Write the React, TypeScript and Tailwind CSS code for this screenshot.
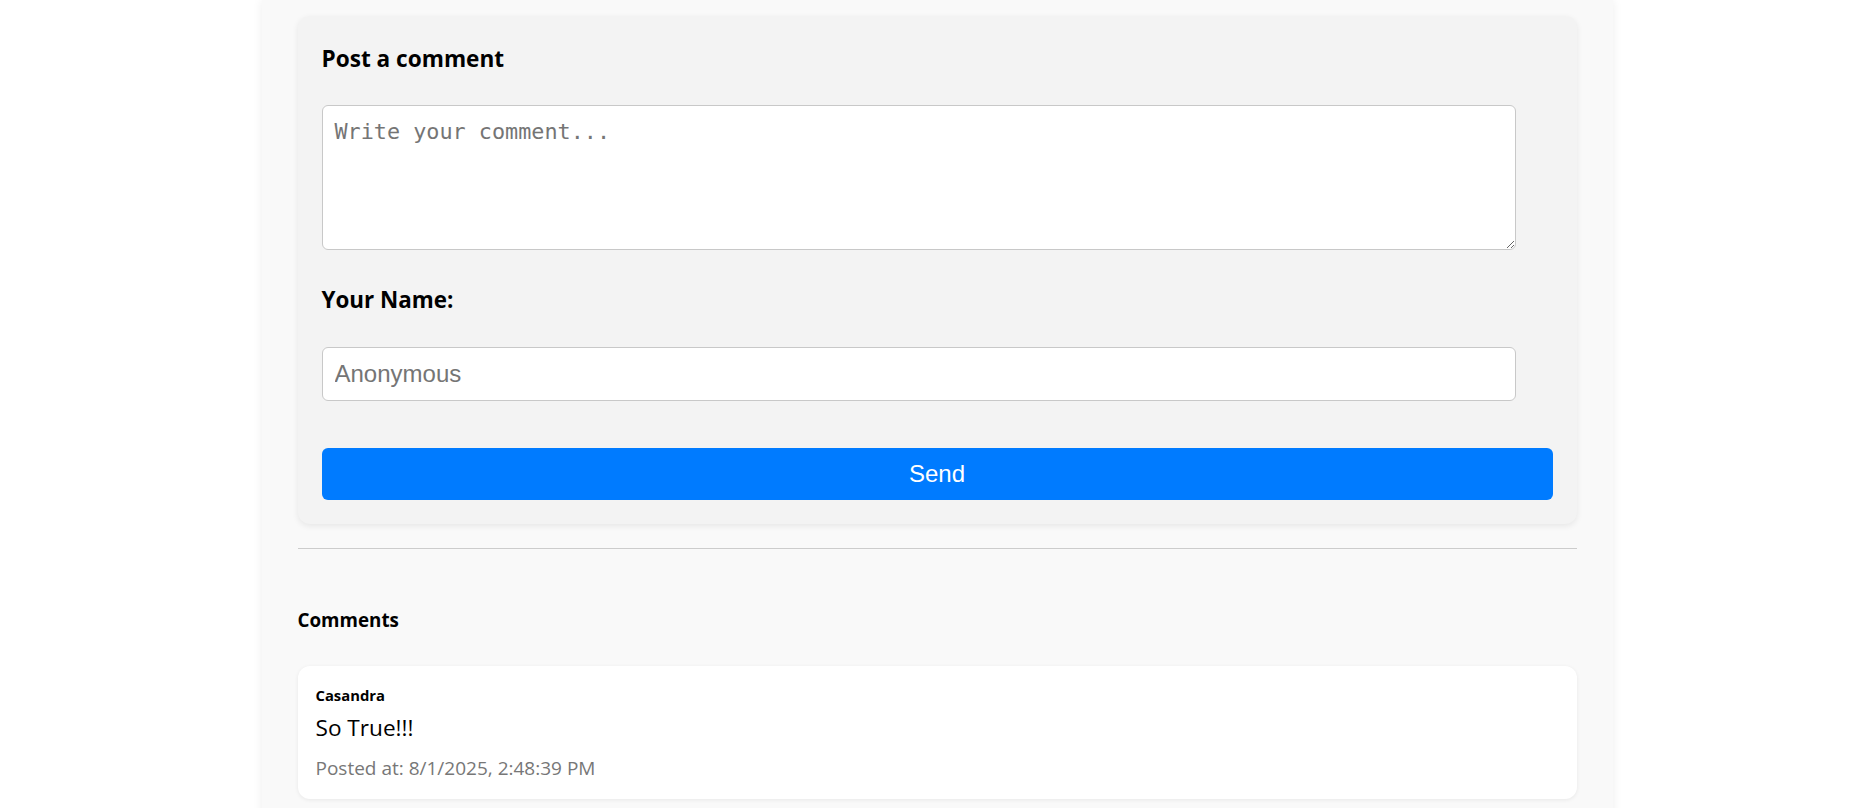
import React from "react";

const sans = "font-['Open_Sans','Noto_Sans',sans-serif]";

export default function App() {
  return (
    <div className="min-h-screen w-full bg-white">
      <div className="mx-auto w-[1351px] min-h-[900px] bg-[#f9f9f9] px-[36px] pt-[16px] pb-[40px] shadow-[0_0_10px_rgba(0,0,0,0.07)]">
        <div className="rounded-[12px] bg-[#f3f3f3] px-[24px] pt-[24px] pb-[24px] shadow-[0_2px_6px_rgba(0,0,0,0.08)]">
          <h2 className={`${sans} text-[22.6px] font-bold leading-[37px] text-black`}>Post a comment</h2>
          <textarea
            className="mt-[28px] block h-[145px] w-[1194px] rounded-[6px] border border-[#c8c8c8] bg-white px-[12px] pt-[12px] font-['DejaVu_Sans_Mono',monospace] text-[21.8px] leading-[28px] text-black placeholder:text-[#757575] outline-none"
            placeholder="Write your comment..."
          />
          <label className={`${sans} mt-[35px] block text-[22.4px] font-bold leading-[29px] text-black`}>Your Name:</label>
          <input
            className="mt-[33px] block h-[54px] w-[1194px] rounded-[6px] border border-[#c8c8c8] bg-white px-[12px] font-['Liberation_Sans',Arial,sans-serif] text-[24px] text-black placeholder:text-[#757575] outline-none"
            placeholder="Anonymous"
          />
          <button className="mt-[47px] block h-[52px] w-full rounded-[6px] bg-[#007bff] font-['Liberation_Sans',Arial,sans-serif] text-[24px] text-white">
            Send
          </button>
        </div>
        <div className="mt-[24px] border-t border-[#cccccc]" />
        <h3 className={`${sans} mt-[59px] text-[18.8px] font-bold leading-[24px] text-black`}>Comments</h3>
        <div className="mt-[34px] rounded-[12px] bg-white px-[18px] pt-[20px] pb-[19px] shadow-[0_1px_4px_rgba(0,0,0,0.07)]">
          <div className={`${sans} text-[14.8px] font-bold leading-[18px] text-black`}>Casandra</div>
          <div className={`${sans} mt-[10px] text-[22.6px] leading-[28px] text-black`}>So True!!!</div>
          <div className={`${sans} mt-[14px] text-[19px] leading-[24px] text-[#777777]`}>Posted at: 8/1/2025, 2:48:39 PM</div>
        </div>
      </div>
    </div>
  );
}
